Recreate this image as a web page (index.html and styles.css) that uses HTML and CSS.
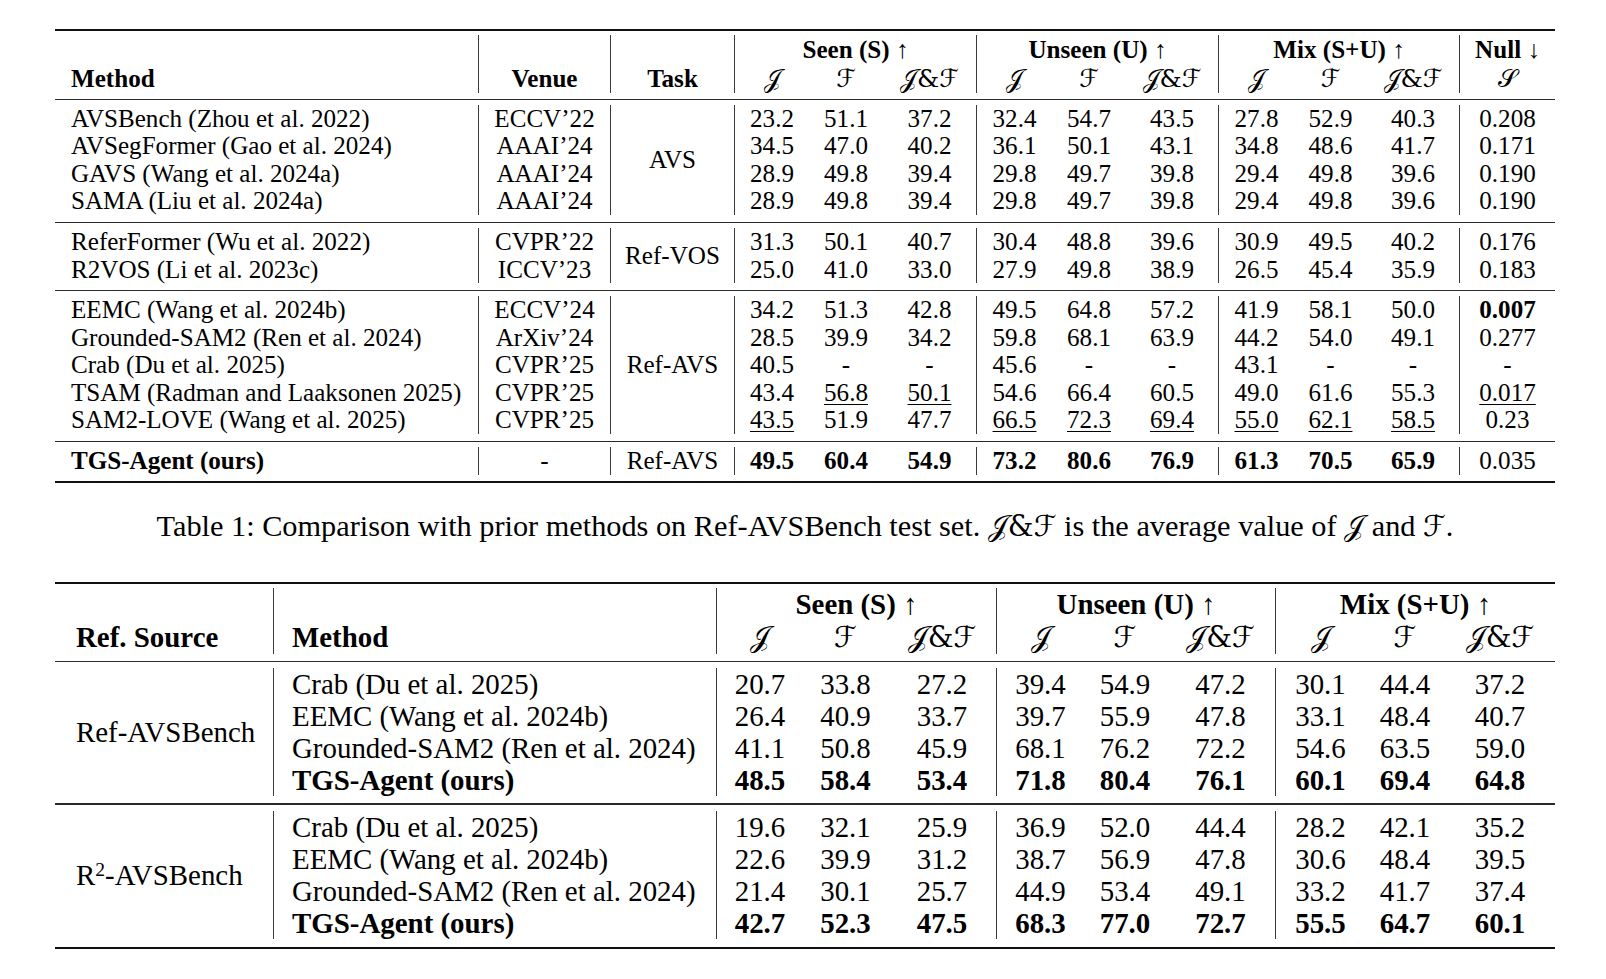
FILE: index.html
```html
<!DOCTYPE html>
<html>
<head>
<meta charset="utf-8">
<link rel="stylesheet" href="styles.css">
</head>
<body>
<div class="page">
<table class="t1">
<colgroup>
<col style="width:423px"><col style="width:132px"><col style="width:124px">
<col style="width:75px"><col style="width:74px"><col style="width:93px">
<col style="width:76px"><col style="width:74px"><col style="width:92px">
<col style="width:76px"><col style="width:73px"><col style="width:92px">
<col style="width:96px">
</colgroup>
<tr class="rule top"><td colspan="13"><div class="ln thick"></div></td></tr>
<tr class="hd">
<th rowspan="2" class="lft bt">Method</th>
<th rowspan="2" class="vl bt">Venue</th>
<th rowspan="2" class="vl bt">Task</th>
<th colspan="3" class="vl">Seen (S) <span class="ar">↑</span></th>
<th colspan="3" class="vl">Unseen (U) <span class="ar">↑</span></th>
<th colspan="3" class="vl">Mix (S+U) <span class="ar">↑</span></th>
<th class="vl">Null <span class="ar">↓</span></th>
</tr>
<tr class="hd">
<td class="vl m">𝒥</td><td class="m">ℱ</td><td class="m">𝒥&amp;ℱ</td>
<td class="vl m">𝒥</td><td class="m">ℱ</td><td class="m">𝒥&amp;ℱ</td>
<td class="vl m">𝒥</td><td class="m">ℱ</td><td class="m">𝒥&amp;ℱ</td>
<td class="vl m">𝒮</td>
</tr>
<tr class="rule mid first"><td colspan="13"><div class="ln"></div></td></tr>
<tr><td class="lft">AVSBench (Zhou et al. 2022)</td><td class="vl">ECCV’22</td><td class="vl" rowspan="4">AVS</td>
<td class="vl">23.2</td><td>51.1</td><td>37.2</td><td class="vl">32.4</td><td>54.7</td><td>43.5</td><td class="vl">27.8</td><td>52.9</td><td>40.3</td><td class="vl">0.208</td></tr>
<tr><td class="lft">AVSegFormer (Gao et al. 2024)</td><td class="vl">AAAI’24</td>
<td class="vl">34.5</td><td>47.0</td><td>40.2</td><td class="vl">36.1</td><td>50.1</td><td>43.1</td><td class="vl">34.8</td><td>48.6</td><td>41.7</td><td class="vl">0.171</td></tr>
<tr><td class="lft">GAVS (Wang et al. 2024a)</td><td class="vl">AAAI’24</td>
<td class="vl">28.9</td><td>49.8</td><td>39.4</td><td class="vl">29.8</td><td>49.7</td><td>39.8</td><td class="vl">29.4</td><td>49.8</td><td>39.6</td><td class="vl">0.190</td></tr>
<tr><td class="lft">SAMA (Liu et al. 2024a)</td><td class="vl">AAAI’24</td>
<td class="vl">28.9</td><td>49.8</td><td>39.4</td><td class="vl">29.8</td><td>49.7</td><td>39.8</td><td class="vl">29.4</td><td>49.8</td><td>39.6</td><td class="vl">0.190</td></tr>
<tr class="rule mid"><td colspan="13"><div class="ln"></div></td></tr>
<tr><td class="lft">ReferFormer (Wu et al. 2022)</td><td class="vl">CVPR’22</td><td class="vl" rowspan="2">Ref-VOS</td>
<td class="vl">31.3</td><td>50.1</td><td>40.7</td><td class="vl">30.4</td><td>48.8</td><td>39.6</td><td class="vl">30.9</td><td>49.5</td><td>40.2</td><td class="vl">0.176</td></tr>
<tr><td class="lft">R2VOS (Li et al. 2023c)</td><td class="vl">ICCV’23</td>
<td class="vl">25.0</td><td>41.0</td><td>33.0</td><td class="vl">27.9</td><td>49.8</td><td>38.9</td><td class="vl">26.5</td><td>45.4</td><td>35.9</td><td class="vl">0.183</td></tr>
<tr class="rule mid"><td colspan="13"><div class="ln"></div></td></tr>
<tr><td class="lft">EEMC (Wang et al. 2024b)</td><td class="vl">ECCV’24</td><td class="vl" rowspan="5">Ref-AVS</td>
<td class="vl">34.2</td><td>51.3</td><td>42.8</td><td class="vl">49.5</td><td>64.8</td><td>57.2</td><td class="vl">41.9</td><td>58.1</td><td>50.0</td><td class="vl b">0.007</td></tr>
<tr><td class="lft">Grounded-SAM2 (Ren et al. 2024)</td><td class="vl">ArXiv’24</td>
<td class="vl">28.5</td><td>39.9</td><td>34.2</td><td class="vl">59.8</td><td>68.1</td><td>63.9</td><td class="vl">44.2</td><td>54.0</td><td>49.1</td><td class="vl">0.277</td></tr>
<tr><td class="lft">Crab (Du et al. 2025)</td><td class="vl">CVPR’25</td>
<td class="vl">40.5</td><td>-</td><td>-</td><td class="vl">45.6</td><td>-</td><td>-</td><td class="vl">43.1</td><td>-</td><td>-</td><td class="vl">-</td></tr>
<tr><td class="lft">TSAM (Radman and Laaksonen 2025)</td><td class="vl">CVPR’25</td>
<td class="vl">43.4</td><td><u>56.8</u></td><td><u>50.1</u></td><td class="vl">54.6</td><td>66.4</td><td>60.5</td><td class="vl">49.0</td><td>61.6</td><td>55.3</td><td class="vl"><u>0.017</u></td></tr>
<tr><td class="lft">SAM2-LOVE (Wang et al. 2025)</td><td class="vl">CVPR’25</td>
<td class="vl"><u>43.5</u></td><td>51.9</td><td>47.7</td><td class="vl"><u>66.5</u></td><td><u>72.3</u></td><td><u>69.4</u></td><td class="vl"><u>55.0</u></td><td><u>62.1</u></td><td><u>58.5</u></td><td class="vl">0.23</td></tr>
<tr class="rule mid"><td colspan="13"><div class="ln"></div></td></tr>
<tr><td class="lft b">TGS-Agent (ours)</td><td class="vl">-</td><td class="vl">Ref-AVS</td>
<td class="vl b">49.5</td><td class="b">60.4</td><td class="b">54.9</td><td class="vl b">73.2</td><td class="b">80.6</td><td class="b">76.9</td><td class="vl b">61.3</td><td class="b">70.5</td><td class="b">65.9</td><td class="vl">0.035</td></tr>
<tr class="rule bot"><td colspan="13"><div class="ln thick"></div></td></tr>
</table>

<p class="caption">Table 1: Comparison with prior methods on Ref-AVSBench test set. <span class="m">𝒥&amp;ℱ</span> is the average value of <span class="m">𝒥</span> and <span class="m">ℱ</span>.</p>

<table class="t2">
<colgroup>
<col style="width:218px"><col style="width:443px">
<col style="width:87px"><col style="width:85px"><col style="width:108px">
<col style="width:88px"><col style="width:82px"><col style="width:109px">
<col style="width:90px"><col style="width:80px"><col style="width:110px">
</colgroup>
<tr class="rule top"><td colspan="11"><div class="ln thick"></div></td></tr>
<tr class="hd">
<th rowspan="2" class="src bt">Ref. Source</th>
<th rowspan="2" class="vl lft bt">Method</th>
<th colspan="3" class="vl">Seen (S) <span class="ar">↑</span></th>
<th colspan="3" class="vl">Unseen (U) <span class="ar">↑</span></th>
<th colspan="3" class="vl">Mix (S+U) <span class="ar">↑</span></th>
</tr>
<tr class="hd">
<td class="vl m">𝒥</td><td class="m">ℱ</td><td class="m">𝒥&amp;ℱ</td>
<td class="vl m">𝒥</td><td class="m">ℱ</td><td class="m">𝒥&amp;ℱ</td>
<td class="vl m">𝒥</td><td class="m">ℱ</td><td class="m">𝒥&amp;ℱ</td>
</tr>
<tr class="rule mid"><td colspan="11"><div class="ln"></div></td></tr>
<tr><td class="src" rowspan="4">Ref-AVSBench</td><td class="vl lft">Crab (Du et al. 2025)</td>
<td class="vl">20.7</td><td>33.8</td><td>27.2</td><td class="vl">39.4</td><td>54.9</td><td>47.2</td><td class="vl">30.1</td><td>44.4</td><td>37.2</td></tr>
<tr><td class="vl lft">EEMC (Wang et al. 2024b)</td>
<td class="vl">26.4</td><td>40.9</td><td>33.7</td><td class="vl">39.7</td><td>55.9</td><td>47.8</td><td class="vl">33.1</td><td>48.4</td><td>40.7</td></tr>
<tr><td class="vl lft">Grounded-SAM2 (Ren et al. 2024)</td>
<td class="vl">41.1</td><td>50.8</td><td>45.9</td><td class="vl">68.1</td><td>76.2</td><td>72.2</td><td class="vl">54.6</td><td>63.5</td><td>59.0</td></tr>
<tr><td class="vl lft b">TGS-Agent (ours)</td>
<td class="vl b">48.5</td><td class="b">58.4</td><td class="b">53.4</td><td class="vl b">71.8</td><td class="b">80.4</td><td class="b">76.1</td><td class="vl b">60.1</td><td class="b">69.4</td><td class="b">64.8</td></tr>
<tr class="rule mid"><td colspan="11"><div class="ln"></div></td></tr>
<tr><td class="src" rowspan="4">R<sup>2</sup>-AVSBench</td><td class="vl lft">Crab (Du et al. 2025)</td>
<td class="vl">19.6</td><td>32.1</td><td>25.9</td><td class="vl">36.9</td><td>52.0</td><td>44.4</td><td class="vl">28.2</td><td>42.1</td><td>35.2</td></tr>
<tr><td class="vl lft">EEMC (Wang et al. 2024b)</td>
<td class="vl">22.6</td><td>39.9</td><td>31.2</td><td class="vl">38.7</td><td>56.9</td><td>47.8</td><td class="vl">30.6</td><td>48.4</td><td>39.5</td></tr>
<tr><td class="vl lft">Grounded-SAM2 (Ren et al. 2024)</td>
<td class="vl">21.4</td><td>30.1</td><td>25.7</td><td class="vl">44.9</td><td>53.4</td><td>49.1</td><td class="vl">33.2</td><td>41.7</td><td>37.4</td></tr>
<tr><td class="vl lft b">TGS-Agent (ours)</td>
<td class="vl b">42.7</td><td class="b">52.3</td><td class="b">47.5</td><td class="vl b">68.3</td><td class="b">77.0</td><td class="b">72.7</td><td class="vl b">55.5</td><td class="b">64.7</td><td class="b">60.1</td></tr>
<tr class="rule bot"><td colspan="11"><div class="ln thick"></div></td></tr>
</table>
</div>
</body>
</html>
```
FILE: styles.css
```css
html, body {
  margin: 0;
  padding: 0;
  background: #ffffff;
}
.page {
  padding: 29px 0 0 55px;
  width: 1500px;
  font-family: "Liberation Serif", "Times New Roman", serif;
  color: #000;
}
table {
  border-collapse: separate;
  border-spacing: 0;
  table-layout: fixed;
  width: 1500px;
}
td, th {
  padding: 0;
  text-align: center;
  white-space: nowrap;
  vertical-align: middle;
}
th { font-weight: bold; }
.b { font-weight: bold; }
.lft { text-align: left; }
.bt { vertical-align: bottom; }
.vl { border-left: 1px solid #3a3a3a; }
.ar { font-weight: normal; }
.m {
  font-family: "DejaVu Serif", "DejaVu Sans", serif;
  font-weight: normal;
}
u {
  text-decoration-thickness: 1px;
  text-underline-offset: 3px;
}

.rule td { padding: 0; border: none; line-height: 0; }
.ln { height: 1.3px; background: #2a2a2a; }
.ln.thick { height: 2px; background: #111; }

/* Table 1 */
.t1 { font-size: 25.1px; }
.t1 td, .t1 th { line-height: 27.5px; height: 27.5px; }
.t1 .hd td, .t1 .hd th { line-height: 29px; height: 29px; }
.t1 .lft { padding-left: 16px; }
.t1 .m { font-size: 25px; }
.t1 .rule.top td { padding: 0 0 4px; height: auto; }
.t1 .rule.mid td { padding: 7px 0 5px; height: auto; }
.t1 .rule.mid.first td { padding: 6px 0 4.5px; }
.t1 .rule.bot td { padding: 6px 0 0; height: auto; }

.caption {
  margin: 26px 0 0;
  text-align: center;
  font-size: 30.3px;
  line-height: 34px;
}
.caption .m { font-size: 29px; }

/* Table 2 */
.t2 { font-size: 28.9px; margin-top: 39px; }
.t2 td, .t2 th { line-height: 32px; height: 32px; }
.t2 .hd td, .t2 .hd th { line-height: 33px; height: 33px; }
.t2 .lft { padding-left: 18px; }
.t2 .src { text-align: left; padding-left: 21px; }
.t2 .m { font-size: 29px; }
.t2 .rule.top td { padding: 0 0 4px; height: auto; }
.t2 .rule.mid td { padding: 7px 0 6px; height: auto; }
.t2 .rule.bot td { padding: 8px 0 0; height: auto; }
.t2 .ln.thick { height: 2.5px; }
sup {
  font-size: 0.68em;
  line-height: 0;
  vertical-align: 0.45em;
}
```
